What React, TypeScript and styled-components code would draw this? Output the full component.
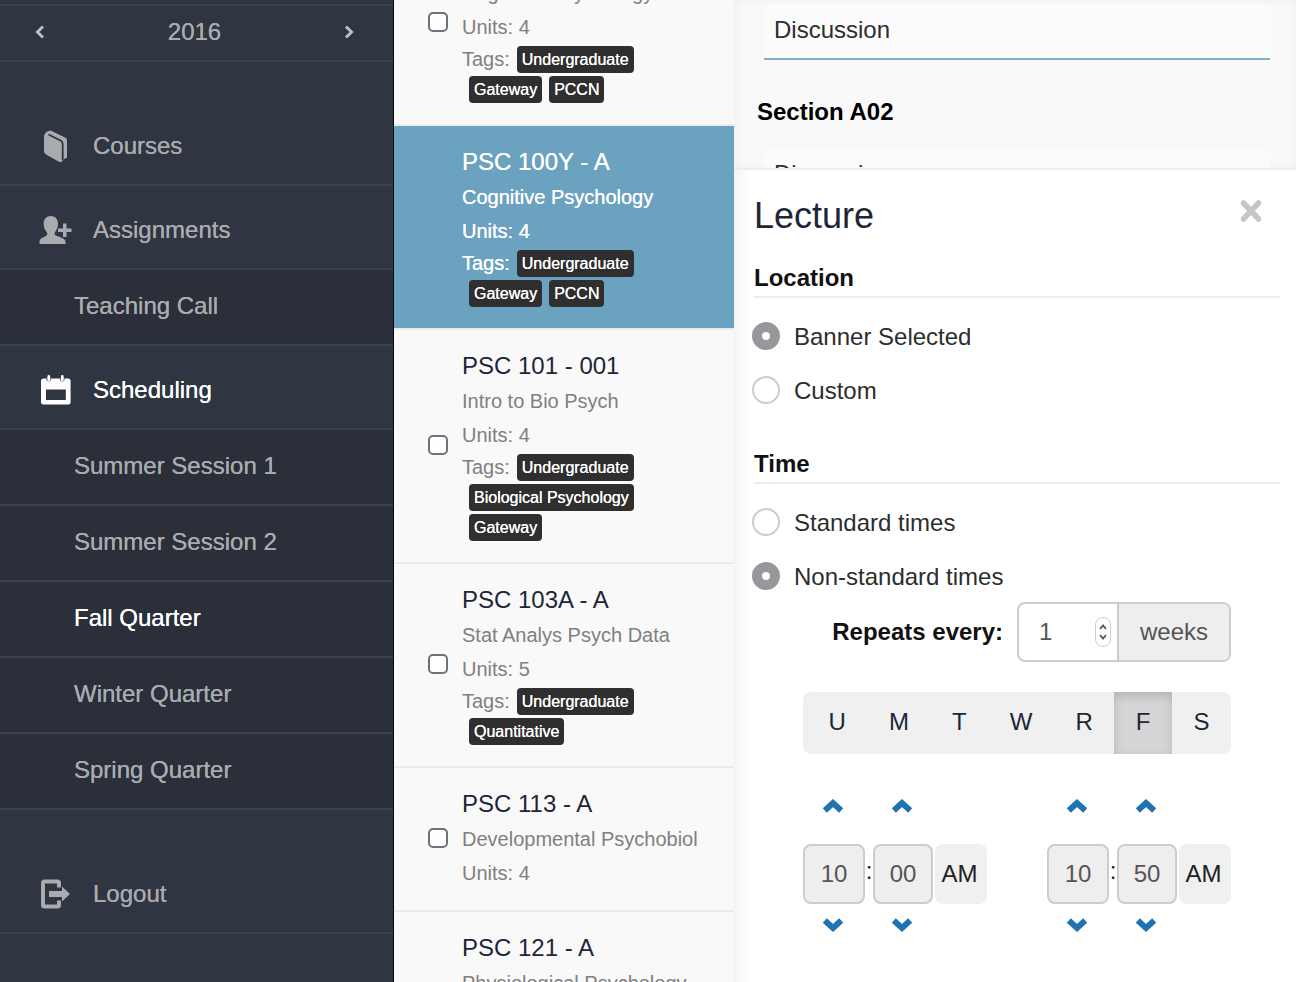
import React, { useLayoutEffect, useRef, useState } from "react";
import styled, { createGlobalStyle, css } from "styled-components";

const color = {
  nav: "#2f3541",
  navSub: "#2b2f3a",
  navLine: "#3c414c",
  navText: "#a9abaf",
  blue: "#6ba2c0",
  link: "#1f73b3",
  ink: "#1d2636",
  line: "#ececec",
  border: "#cccccc",
};

const GlobalStyle = createGlobalStyle`
  *, *::before, *::after { box-sizing: border-box; }
  body {
    margin: 0;
    font-family: "Liberation Sans", Arial, sans-serif;
    font-size: 24px;
    color: ${color.ink};
    background: #f9f9f9;
  }
  button, input { font: inherit; }
`;

const Page = styled.div`
  display: grid;
  grid-template-columns: 394px 340px minmax(0, 1fr);
  height: 100vh;
  overflow: hidden;
`;

/* Sidebar */

const Sidebar = styled.nav`
  background: ${color.nav};
  border-right: 1px solid #05070c;
  color: ${color.navText};
  text-shadow: 0 0 currentColor;
  overflow: hidden;
`;

const SidebarTop = styled.div`
  height: 6px;
  border-bottom: 2px solid ${color.navLine};
`;

const YearBar = styled.div`
  display: flex;
  align-items: center;
  justify-content: space-between;
  height: 56px;
  padding: 0 36px 2px 32px;
  border-bottom: 2px solid ${color.navLine};
`;

const YearButton = styled.button`
  display: flex;
  align-items: center;
  justify-content: center;
  width: 16px;
  height: 28px;
  padding: 0;
  border: 0;
  background: none;
  color: #bcbec3;
`;

const NavItem = styled.a<{ $active?: boolean; $spaced?: boolean }>`
  display: flex;
  align-items: center;
  gap: 18px;
  height: 84px;
  padding: 6px 0 0 37px;
  border-bottom: 2px solid ${color.navLine};
  color: ${(p) => (p.$active ? "#fff" : color.navText)};
  text-decoration: none;
  ${(p) => p.$spaced && css`margin-top: 40px;`}
`;

const NavIcon = styled.span`
  display: flex;
  justify-content: center;
  width: 38px;
`;

const NavSubItem = styled.a<{ $active?: boolean }>`
  display: flex;
  align-items: center;
  height: 76px;
  padding: 0 0 2px 74px;
  border-bottom: 2px solid ${color.navLine};
  background: ${color.navSub};
  color: ${(p) => (p.$active ? "#fff" : color.navText)};
  text-decoration: none;
`;

/* Course list */

const CourseList = styled.ul`
  margin: 0;
  padding: 0;
  list-style: none;
  overflow-y: auto;
  scrollbar-width: none;
  background: #f9f9f9;
`;

const CourseItem = styled.li<{ $selected?: boolean }>`
  display: grid;
  grid-template-columns: 20px minmax(0, 1fr);
  column-gap: 14px;
  align-items: center;
  padding: 20px 32px 20px 34px;
  border-bottom: 2px solid ${color.line};
  background: ${(p) => (p.$selected ? color.blue : "transparent")};
  background-clip: padding-box;
  color: ${(p) => (p.$selected ? "#fff" : "#808080")};
  ${(p) => p.$selected && css`text-shadow: 0 0 currentColor;`}
`;

const Check = styled.input`
  appearance: none;
  width: 20px;
  height: 20px;
  margin: 0 0 2px;
  border: 2px solid #6d727c;
  border-radius: 5px;
  background: #fff;
`;

const CourseBody = styled.label`
  grid-column: 2;
  display: block;
`;

const CourseTitle = styled.span<{ $selected?: boolean }>`
  display: block;
  margin-bottom: 2px;
  line-height: 32px;
  color: ${(p) => (p.$selected ? "#fff" : color.ink)};
`;

const CourseLine = styled.span`
  display: block;
  font-size: 20px;
  line-height: 34px;
  white-space: nowrap;
`;

const TagRow = styled.span`
  display: flex;
  flex-wrap: wrap;
  font-size: 20px;
  line-height: 30px;
`;

const Tag = styled.span`
  height: 27px;
  margin: 2px 0 1px 7px;
  padding: 0 5px;
  border-radius: 4px;
  background: #2f2f2f;
  color: #fff;
  font-size: 16px;
  line-height: 28px;
  text-shadow: 0 0 currentColor;
`;

/* Right column */

const Details = styled.main`
  display: flex;
  flex-direction: column;
  min-height: 0;
`;

const Sections = styled.section`
  flex: 1;
  min-height: 0;
  padding: 4px 26px 0 30px;
  overflow: hidden;
  background: #f9f9f9;
  box-shadow: inset 0 0 10px rgba(0, 0, 0, 0.05);
`;

const ActivityRow = styled.div`
  height: 56px;
  padding: 0 10px;
  border-bottom: 2px solid #80b0cb;
  background: #fbfbfb;
  color: #2d2d2d;
  line-height: 52px;
`;

const SectionTitle = styled.h3`
  margin: 36px 0 20px -7px;
  color: #000;
  font-size: 24px;
  line-height: 32px;
`;

const Panel = styled.form`
  flex: none;
  padding: 26px 16px 36px 20px;
  border-top: 2px solid #ededed;
  background: linear-gradient(to right, #f4f4f4, #fff 16px);
`;

const PanelHeader = styled.header`
  display: flex;
  align-items: flex-start;
  justify-content: space-between;
  padding-right: 17px;
`;

const PanelTitle = styled.h2`
  margin: 0;
  font-size: 36px;
  font-weight: 400;
  line-height: 40px;
`;

const CloseButton = styled.button`
  display: flex;
  padding: 3px 0;
  border: 0;
  background: none;
  color: #c6c6c6;
`;

const Group = styled.fieldset<{ $first?: boolean }>`
  display: flex;
  flex-direction: column;
  gap: 4px;
  min-width: 0;
  margin: ${(p) => (p.$first ? "28px" : "34px")} 0 0;
  padding: 0;
  border: 0;
`;

const GroupTitle = styled.legend`
  width: 100%;
  margin-bottom: 14px;
  padding: 0 0 4px;
  border-bottom: 2px solid ${color.line};
  color: #111;
  font-weight: 700;
  line-height: 28px;
`;

const RadioRow = styled.label`
  display: flex;
  align-items: center;
  gap: 14px;
  height: 50px;
  margin-left: -2px;
  color: #2d2d2d;
`;

const Radio = styled.input`
  appearance: none;
  width: 28px;
  height: 28px;
  margin: 0 0 2px;
  border: 2px solid ${color.border};
  border-radius: 50%;
  background: #fff;
  &:checked {
    border: 10px solid #98979c;
  }
`;

const Schedule = styled.div`
  padding: 0 49px;
`;

const RepeatRow = styled.div`
  display: flex;
  align-items: center;
  justify-content: flex-end;
  gap: 14px;
  color: #111;
  font-weight: 700;
`;

const InputGroup = styled.div`
  display: flex;
  height: 60px;
  border: 2px solid ${color.border};
  border-radius: 8px;
  overflow: hidden;
  background: #fff;
  color: #555;
  font-weight: 400;
`;

const WeekInput = styled.input`
  appearance: textfield;
  width: 76px;
  padding: 0 0 0 20px;
  border: 0;
  outline: 0;
  background: none;
  color: #555;
  &::-webkit-inner-spin-button {
    display: none;
  }
`;

const Stepper = styled.span`
  display: flex;
  flex-direction: column;
  align-self: center;
  justify-content: center;
  gap: 4px;
  width: 16px;
  height: 30px;
  margin-right: 6px;
  border: 1px solid ${color.border};
  border-radius: 8px;
  color: #555;
`;

const StepButton = styled.button`
  display: flex;
  justify-content: center;
  padding: 0;
  border: 0;
  background: none;
  color: inherit;
`;

const Addon = styled.span`
  width: 112px;
  border-left: 2px solid ${color.border};
  background: #eee;
  line-height: 56px;
  text-align: center;
`;

const Days = styled.div`
  display: flex;
  height: 62px;
  margin-top: 30px;
  padding-left: 4px;
  border-radius: 8px;
  overflow: hidden;
  background: #f0f0f0;
`;

const Day = styled.button<{ $on: boolean }>`
  flex: 1 1 auto;
  padding: 0 0 2px;
  border: 0;
  color: ${color.ink};
  background: ${(p) => (p.$on ? "#d5d5d7" : "transparent")};
  box-shadow: ${(p) => (p.$on ? "inset 0 4px 10px rgba(0, 0, 0, 0.16)" : "none")};
`;

const Times = styled.div`
  display: flex;
  justify-content: space-between;
  margin-top: 14px;
`;

const Picker = styled.div`
  display: grid;
  grid-template-columns: 62px 8px 60px 54px;
  grid-template-rows: 76px 60px 42px;
`;

const Arrow = styled.button<{ $col: number; $row: number }>`
  display: flex;
  align-items: center;
  justify-content: center;
  grid-column: ${(p) => p.$col};
  grid-row: ${(p) => p.$row};
  padding: 0 3px 0 0;
  border: 0;
  background: none;
  color: ${color.link};
`;

const TimeInput = styled.input<{ $col: number }>`
  grid-column: ${(p) => p.$col};
  grid-row: 2;
  width: 100%;
  min-width: 0;
  padding: 0;
  border: 2px solid ${color.border};
  border-radius: 8px;
  background: #eee;
  color: #555;
  text-align: center;
`;

const Colon = styled.span`
  grid-column: 2;
  grid-row: 2;
  line-height: 54px;
  text-align: center;
`;

const Period = styled.button`
  grid-column: 4;
  grid-row: 2;
  margin-left: 2px;
  padding: 0 3px 0 0;
  border: 0;
  border-radius: 8px;
  background: #f0f0f0;
  color: #222;
`;

/* Icons */

const AngleIcon = ({ right }: { right?: boolean }) => (
  <svg width="10" height="14" viewBox="0 0 10 14" fill="none" stroke="currentColor" strokeWidth="3">
    <path d={right ? "M2 1.5 L7.5 7 L2 12.5" : "M8 1.5 L2.5 7 L8 12.5"} />
  </svg>
);

const BookIcon = () => (
  <svg width="28" height="34" viewBox="0 0 28 34">
    <path
      fill="currentColor"
      d="M2.5 5.5 Q4 2 8.5 1.5 L23.5 8.8 Q25 9.6 25 11.5 V28 Q25 29.5 22 30 L19.5 32.8 Q18.5 33.6 17 32.8 L4 25.5 Q2 24.3 2 22 V8 Q2 6.5 2.5 5.5 Z"
    />
    <path d="M6.5 5.5 L18.5 11.5 Q20.7 12.7 20.7 15 V31" fill="none" stroke={color.nav} strokeWidth="1.8" />
  </svg>
);

const UserPlusIcon = () => (
  <svg width="34" height="30" viewBox="0 0 34 30" fill="currentColor">
    <path d="M11.8 1 C16 1 19 4 19 8.5 C19 12.5 17.5 15.5 15.7 17.5 C15.3 19.5 16.2 20.3 18 21 C22 22.6 26.5 23.5 26.5 27 V29 H0.5 V27 C0.5 23.5 4 22.6 6.5 21.2 C8.3 20.3 8.6 19.2 8 17.5 C6 15.5 4.6 12.5 4.6 8.5 C4.6 4 7.6 1 11.8 1 Z" />
    <path d="M24 8.5 H27.5 V13.5 H32.5 V17 H27.5 V22 H24 V17 H19 V13.5 H24 Z" />
  </svg>
);

const CalendarIcon = () => (
  <svg width="32" height="30" viewBox="0 0 32 30">
    <rect x="1" y="3.5" width="29.6" height="26" rx="2.5" fill="currentColor" />
    <rect x="6" y="14.5" width="19.8" height="10.5" fill={color.nav} />
    <path d="M6.5 3.5 H11 V5 Q8.8 8 6.5 5 Z M20 3.5 H24.5 V5 Q22.3 8 20 5 Z" fill={color.nav} />
    <path d="M8.8 1.5 V5 M22.3 1.5 V5" stroke="currentColor" strokeWidth="2.8" strokeLinecap="round" />
  </svg>
);

const LogoutIcon = () => (
  <svg width="32" height="32" viewBox="0 0 32 32">
    <path
      d="M19 9.5 V5 Q19 3.5 17.5 3.5 H4.5 Q3 3.5 3 5 V27 Q3 28.5 4.5 28.5 H17.5 Q19 28.5 19 27 V22.5"
      fill="none"
      stroke="currentColor"
      strokeWidth="4"
    />
    <path d="M9 13 H22 V8.6 L30 16 L22 23.4 V19 H9 Z" fill="currentColor" />
  </svg>
);

const CloseIcon = () => (
  <svg width="24" height="24" viewBox="0 0 24 24" stroke="currentColor" strokeWidth="5.5" strokeLinecap="round">
    <path d="M4.5 4 L19.5 20 M19.5 4 L4.5 20" />
  </svg>
);

const ChevronIcon = ({ down }: { down?: boolean }) => (
  <svg width="22" height="16" viewBox="0 0 22 16" fill="none" stroke="currentColor" strokeWidth="6">
    <path d={down ? "M2.8 3.6 L11 11 L19.2 3.6" : "M2.8 12.4 L11 5 L19.2 12.4"} />
  </svg>
);

const StepIcon = ({ down }: { down?: boolean }) => (
  <svg width="8" height="6" viewBox="0 0 8 6" fill="none" stroke="currentColor" strokeWidth="1.8">
    <path d={down ? "M1 1 L4 4.5 L7 1" : "M1 5 L4 1.5 L7 5"} />
  </svg>
);

/* Data */

type Course = { title: string; name: string; units: number; tags: string[]; selected?: boolean };

const courses: Course[] = [
  { title: "PSC 100 - A", name: "Cognitive Psychology", units: 4, tags: ["Undergraduate", "Gateway", "PCCN"] },
  { title: "PSC 100Y - A", name: "Cognitive Psychology", units: 4, tags: ["Undergraduate", "Gateway", "PCCN"], selected: true },
  { title: "PSC 101 - 001", name: "Intro to Bio Psych", units: 4, tags: ["Undergraduate", "Biological Psychology", "Gateway"] },
  { title: "PSC 103A - A", name: "Stat Analys Psych Data", units: 5, tags: ["Undergraduate", "Quantitative"] },
  { title: "PSC 113 - A", name: "Developmental Psychobiol", units: 4, tags: [] },
  { title: "PSC 121 - A", name: "Physiological Psychology", units: 4, tags: ["Undergraduate", "Biological Psychology"] },
];

const terms = ["Summer Session 1", "Summer Session 2", "Fall Quarter", "Winter Quarter", "Spring Quarter"];

const TimePicker = ({ label, hour, minute }: { label: string; hour: string; minute: string }) => (
  <Picker role="group" aria-label={label}>
    <Arrow type="button" $col={1} $row={1} aria-label="Hour up"><ChevronIcon /></Arrow>
    <Arrow type="button" $col={3} $row={1} aria-label="Minute up"><ChevronIcon /></Arrow>
    <TimeInput $col={1} defaultValue={hour} aria-label={`${label} hour`} />
    <Colon>:</Colon>
    <TimeInput $col={3} defaultValue={minute} aria-label={`${label} minute`} />
    <Period type="button">AM</Period>
    <Arrow type="button" $col={1} $row={3} aria-label="Hour down"><ChevronIcon down /></Arrow>
    <Arrow type="button" $col={3} $row={3} aria-label="Minute down"><ChevronIcon down /></Arrow>
  </Picker>
);

export default function App() {
  const listRef = useRef<HTMLUListElement>(null);
  const [days, setDays] = useState<string[]>(["F"]);
  const [weeks, setWeeks] = useState(1);

  useLayoutEffect(() => {
    if (listRef.current) listRef.current.scrollTop = 78;
  }, []);

  const toggleDay = (d: string) =>
    setDays((on) => (on.includes(d) ? on.filter((x) => x !== d) : [...on, d]));

  return (
    <>
      <GlobalStyle />
      <Page>
        <Sidebar>
          <SidebarTop />
          <YearBar>
            <YearButton type="button" aria-label="Previous year"><AngleIcon /></YearButton>
            <span>2016</span>
            <YearButton type="button" aria-label="Next year"><AngleIcon right /></YearButton>
          </YearBar>
          <NavItem href="#courses" $spaced><NavIcon><BookIcon /></NavIcon>Courses</NavItem>
          <NavItem href="#assignments"><NavIcon><UserPlusIcon /></NavIcon>Assignments</NavItem>
          <NavSubItem href="#teaching-call">Teaching Call</NavSubItem>
          <NavItem href="#scheduling" $active><NavIcon><CalendarIcon /></NavIcon>Scheduling</NavItem>
          {terms.map((t) => (
            <NavSubItem key={t} href="#term" $active={t === "Fall Quarter"}>{t}</NavSubItem>
          ))}
          <NavItem href="#logout" $spaced><NavIcon><LogoutIcon /></NavIcon>Logout</NavItem>
        </Sidebar>

        <CourseList ref={listRef}>
          {courses.map((c, i) => (
            <CourseItem key={c.title} $selected={c.selected}>
              {!c.selected && <Check type="checkbox" id={`course-${i}`} />}
              <CourseBody htmlFor={c.selected ? undefined : `course-${i}`}>
                <CourseTitle $selected={c.selected}>{c.title}</CourseTitle>
                <CourseLine>{c.name}</CourseLine>
                <CourseLine>Units: {c.units}</CourseLine>
                {c.tags.length > 0 && (
                  <TagRow>
                    Tags:
                    {c.tags.map((t) => <Tag key={t}>{t}</Tag>)}
                  </TagRow>
                )}
              </CourseBody>
            </CourseItem>
          ))}
        </CourseList>

        <Details>
          <Sections>
            <ActivityRow>Discussion</ActivityRow>
            <SectionTitle>Section A02</SectionTitle>
            <ActivityRow>Discussion</ActivityRow>
          </Sections>

          <Panel>
            <PanelHeader>
              <PanelTitle>Lecture</PanelTitle>
              <CloseButton type="button" aria-label="Close"><CloseIcon /></CloseButton>
            </PanelHeader>

            <Group $first>
              <GroupTitle>Location</GroupTitle>
              <RadioRow><Radio type="radio" name="location" defaultChecked />Banner Selected</RadioRow>
              <RadioRow><Radio type="radio" name="location" />Custom</RadioRow>
            </Group>

            <Group>
              <GroupTitle>Time</GroupTitle>
              <RadioRow><Radio type="radio" name="time" />Standard times</RadioRow>
              <RadioRow><Radio type="radio" name="time" defaultChecked />Non-standard times</RadioRow>
            </Group>

            <Schedule>
              <RepeatRow>
                <label htmlFor="weeks">Repeats every:</label>
                <InputGroup>
                  <WeekInput id="weeks" type="number" value={weeks} onChange={(e) => setWeeks(Number(e.target.value))} />
                  <Stepper>
                    <StepButton type="button" aria-label="More weeks" onClick={() => setWeeks(weeks + 1)}><StepIcon /></StepButton>
                    <StepButton type="button" aria-label="Fewer weeks" onClick={() => setWeeks(Math.max(1, weeks - 1))}><StepIcon down /></StepButton>
                  </Stepper>
                  <Addon>weeks</Addon>
                </InputGroup>
              </RepeatRow>

              <Days>
                {["U", "M", "T", "W", "R", "F", "S"].map((d) => (
                  <Day key={d} type="button" $on={days.includes(d)} aria-pressed={days.includes(d)} onClick={() => toggleDay(d)}>
                    {d}
                  </Day>
                ))}
              </Days>

              <Times>
                <TimePicker label="Start time" hour="10" minute="00" />
                <TimePicker label="End time" hour="10" minute="50" />
              </Times>
            </Schedule>
          </Panel>
        </Details>
      </Page>
    </>
  );
}
